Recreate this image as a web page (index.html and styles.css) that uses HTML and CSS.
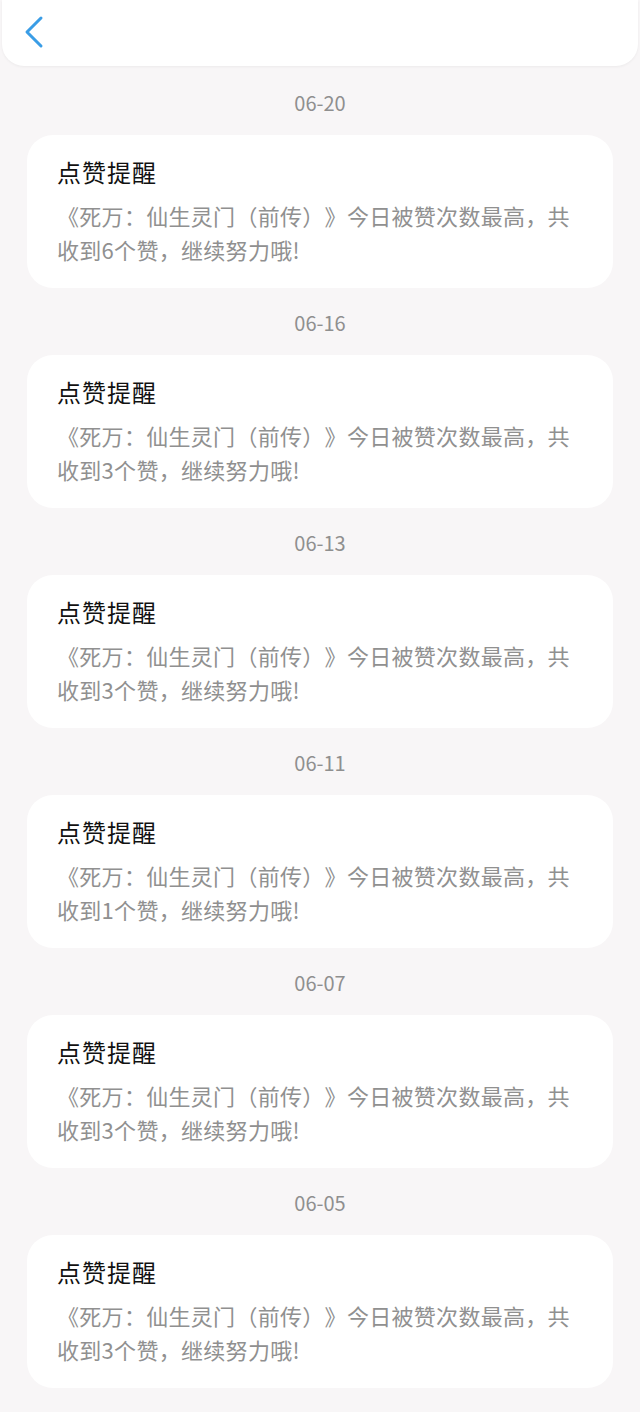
FILE: index.html
```html
<!DOCTYPE html>
<html lang="zh-CN">
<head>
    <meta charset="UTF-8">
    <meta name="viewport" content="width=device-width, initial-scale=1.0">
    <title>点赞提醒</title>
    <link rel="stylesheet" href="styles.css">
</head>
<body>
    <div class="topbar">
        <button class="back" aria-label="返回">
            <svg width="24" height="34" viewBox="0 0 24 34">
                <path d="M17 3 L3 17 L17 31" fill="none" stroke="#3a9de6" stroke-width="3" stroke-linecap="round" stroke-linejoin="round"/>
            </svg>
        </button>
    </div>

    <div class="list">
        <div class="group">
            <div class="date">06-20</div>
            <div class="card">
                <div class="card-title">点赞提醒</div>
                <div class="card-text">《死万：仙生灵门（前传）》今日被赞次数最高，共收到6个赞，继续努力哦!</div>
            </div>
        </div>
        <div class="group">
            <div class="date">06-16</div>
            <div class="card">
                <div class="card-title">点赞提醒</div>
                <div class="card-text">《死万：仙生灵门（前传）》今日被赞次数最高，共收到3个赞，继续努力哦!</div>
            </div>
        </div>
        <div class="group">
            <div class="date">06-13</div>
            <div class="card">
                <div class="card-title">点赞提醒</div>
                <div class="card-text">《死万：仙生灵门（前传）》今日被赞次数最高，共收到3个赞，继续努力哦!</div>
            </div>
        </div>
        <div class="group">
            <div class="date">06-11</div>
            <div class="card">
                <div class="card-title">点赞提醒</div>
                <div class="card-text">《死万：仙生灵门（前传）》今日被赞次数最高，共收到1个赞，继续努力哦!</div>
            </div>
        </div>
        <div class="group">
            <div class="date">06-07</div>
            <div class="card">
                <div class="card-title">点赞提醒</div>
                <div class="card-text">《死万：仙生灵门（前传）》今日被赞次数最高，共收到3个赞，继续努力哦!</div>
            </div>
        </div>
        <div class="group">
            <div class="date">06-05</div>
            <div class="card">
                <div class="card-title">点赞提醒</div>
                <div class="card-text">《死万：仙生灵门（前传）》今日被赞次数最高，共收到3个赞，继续努力哦!</div>
            </div>
        </div>
    </div>
</body>
</html>
```

FILE: styles.css
```css
* {
    box-sizing: border-box;
}

body {
    margin: 0;
    background: #f8f6f7;
    font-family: "Noto Sans CJK SC", "Noto Sans", sans-serif;
    text-spacing-trim: space-all;
    overflow: hidden;
}

.topbar {
    height: 66px;
    margin: 0 2px;
    background: #fff;
    border-radius: 0 0 22px 22px;
    box-shadow: 0 1px 3px rgba(0, 0, 0, 0.05);
    display: flex;
    align-items: center;
    padding-left: 22px;
}

.back {
    display: flex;
    align-items: center;
    padding: 0;
    margin-top: -2px;
    border: none;
    background: transparent;
    cursor: pointer;
}

.list {
    padding: 2px 27px 0;
}

.date {
    padding: 21px 0 18px;
    line-height: 28px;
    font-size: 20px;
    color: #8f8f8f;
    text-align: center;
}

.card {
    background: #fff;
    border-radius: 26px;
    padding: 20px 30px 22px;
}

.card-title {
    font-size: 24px;
    line-height: 34px;
    letter-spacing: 1px;
    color: #111;
}

.card-text {
    margin-top: 9px;
    font-size: 22px;
    line-height: 34px;
    letter-spacing: 0.3px;
    color: #909090;
}
```
